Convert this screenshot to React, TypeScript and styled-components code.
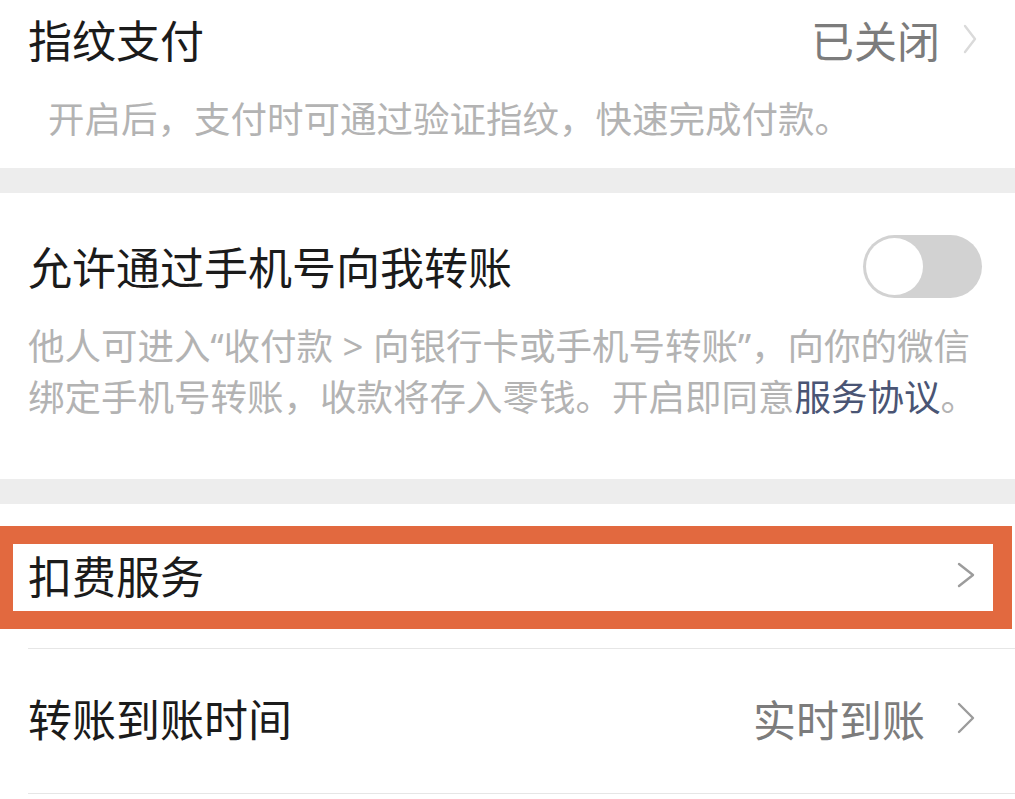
import styled, { createGlobalStyle } from 'styled-components';

const GlobalStyle = createGlobalStyle`
  html, body {
    margin: 0;
    padding: 0;
    background: #ffffff;
  }
  body {
    font-family: 'Noto Sans CJK SC', 'Noto Sans', sans-serif;
    -webkit-font-smoothing: antialiased;
  }
`;

const Page = styled.div`
  width: 1015px;
  height: 799px;
  overflow: hidden;
  background: #ededed;
  display: flex;
  flex-direction: column;
  gap: 25px;
`;

const Section = styled.section<{ $top?: number; $bottom?: number; $grow?: boolean }>`
  background: #ffffff;
  padding-top: ${({ $top }) => $top ?? 0}px;
  padding-bottom: ${({ $bottom }) => $bottom ?? 0}px;
  flex: ${({ $grow }) => ($grow ? '1' : 'none')};
  display: flex;
  flex-direction: column;
`;

const Row = styled.div<{ $height: number; $right?: number; $lift?: number }>`
  height: ${({ $height }) => $height}px;
  box-sizing: border-box;
  display: flex;
  align-items: center;
  justify-content: space-between;
  padding: 0 ${({ $right }) => $right ?? 40}px ${({ $lift }) => $lift ?? 0}px 28px;
`;

const Title = styled.span`
  font-size: 44px;
  line-height: 60px;
  color: #1b1b1b;
`;

const Value = styled.span`
  font-size: 43px;
  line-height: 60px;
  color: #7c7c7c;
`;

const Trailing = styled.div<{ $gap: number }>`
  display: flex;
  align-items: center;
  gap: ${({ $gap }) => $gap}px;
`;

const Desc = styled.p<{ $indent?: number; $top?: number }>`
  margin: ${({ $top }) => $top ?? 0}px 0 0;
  padding-left: ${({ $indent }) => $indent ?? 28}px;
  font-size: 36.5px;
  line-height: 50px;
  color: #b3b3b3;
  white-space: nowrap;
`;

const Quote = styled.span`
  font-family: 'Noto Sans', sans-serif;
`;

const Link = styled.span`
  color: #4a5574;
`;

const Toggle = styled.div`
  width: 119px;
  height: 63px;
  box-sizing: border-box;
  border-radius: 32px;
  background: #d2d2d2;
  padding: 3px;
  display: flex;
  align-items: center;
`;

const Knob = styled.div`
  width: 57px;
  height: 57px;
  border-radius: 50%;
  background: #ffffff;
`;

const Highlight = styled.div`
  margin-top: 22px;
  width: 1012px;
  height: 103px;
  box-sizing: border-box;
  border-style: solid;
  border-color: #e2693f;
  border-width: 18px 19px 18px 13px;
  display: flex;
  align-items: center;
  justify-content: space-between;
  padding: 0 18px 6px 15px;
`;

const Divider = styled.div<{ $top?: number }>`
  margin: ${({ $top }) => $top ?? 0}px 0 0 28px;
  height: 1px;
  background: #e6e6e6;
`;

const Chevron = ({
  color = '#9c9c9c',
  width = 18,
  height = 28,
}: {
  color?: string;
  width?: number;
  height?: number;
}) => (
  <svg width={width} height={height} viewBox={`0 0 ${width} ${height}`} fill="none">
    <polyline
      points={`2,2 ${width - 2},${height / 2} 2,${height - 2}`}
      stroke={color}
      strokeWidth={2.4}
      strokeLinecap="round"
      strokeLinejoin="round"
    />
  </svg>
);

export default function App() {
  return (
    <>
      <GlobalStyle />
      <Page>
        <Section $bottom={25}>
          <Row $height={78} $right={38}>
            <Title>指纹支付</Title>
            <Trailing $gap={23}>
              <Value>已关闭</Value>
              <Chevron color="#dadada" width={14} height={30} />
            </Trailing>
          </Row>
          <Desc $indent={48} $top={15}>
            开启后，支付时可通过验证指纹，快速完成付款。
          </Desc>
        </Section>

        <Section $top={43} $bottom={58}>
          <Row $height={60} $right={33}>
            <Title>允许通过手机号向我转账</Title>
            <Toggle>
              <Knob />
            </Toggle>
          </Row>
          <Desc $top={24}>
            他人可进入<Quote>“</Quote>收付款<Quote> &gt; </Quote>向银行卡或手机号转账<Quote>”</Quote>，向你的微信
            <br />
            绑定手机号转账，收款将存入零钱。开启即同意<Link>服务协议</Link>。
          </Desc>
        </Section>

        <Section $grow>
          <Highlight>
            <Title>扣费服务</Title>
            <Chevron height={26} />
          </Highlight>
          <Divider $top={19} />
          <Row $height={144} $lift={6}>
            <Title>转账到账时间</Title>
            <Trailing $gap={32}>
              <Value>实时到账</Value>
              <Chevron height={32} />
            </Trailing>
          </Row>
          <Divider />
        </Section>
      </Page>
    </>
  );
}
